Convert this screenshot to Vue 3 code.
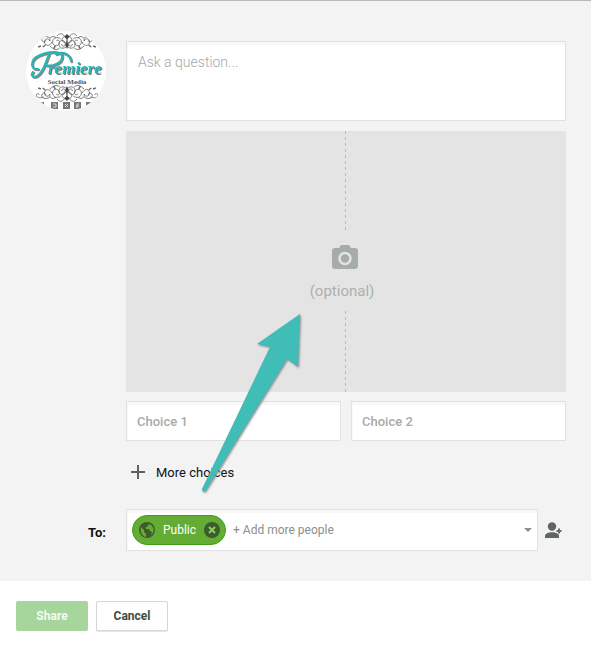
<template>
  <div class="share-box">
    <form class="composer" @submit.prevent>
      <div class="composer-body">
        <div class="avatar">
          <svg viewBox="0 0 80 80" role="img" aria-label="Premiere Social Media">
            <defs>
              <clipPath id="avatar-clip"><circle cx="40" cy="40" r="40" /></clipPath>
              <g id="scroll" fill="none" stroke="#666" stroke-width="0.9">
                <path d="M0 14c-5 0-7-4-4-6s6 2 3 4M0 4c-4-4-9-2-9 2s6 5 7 1-4-4-4-1" />
                <path d="M-7 11c-4 3-9 1-9-3s5-5 7-2-1 5-3 3M-12 12c-3 3-8 1-7-3" />
                <path d="M-17 8c-2-5-8-4-8 0s5 4 6 1M-19 12c-5 3-10 1-9-2s5-2 4 0" />
                <path d="M-26 12c-5 2-8 0-8-2s3-2 3 0M-8 2c-4-3-7-1-11 2M-3 14c-2 3-6 3-8 0" />
                <path d="M-32 3l3 1M-24 5l-3-2M-13 4l-2-3" stroke-width="1.5" />
              </g>
              <g id="ornament">
                <use href="#scroll" />
                <use href="#scroll" transform="scale(-1 1)" />
                <path d="M0 1l2 4-2 4-2-4zM0 11l3 2-3 3-3-3z" fill="#444" />
              </g>
            </defs>
            <g clip-path="url(#avatar-clip)">
              <rect width="80" height="80" fill="#fff" />
              <use href="#ornament" transform="translate(41 19) scale(0.9 -1)" />
              <use href="#ornament" transform="translate(41 54) scale(0.9 1)" />
              <text class="logo-name" x="22" y="43">remiere</text>
              <g fill="none" stroke-linecap="round">
                <path d="M24 24C20 34 18 42 12 46c-4 2-7-1-4-4M13 39C5 40 5 30 13 26c12-6 25-5 24 1 0 6-10 10-16 8M31 24c7-3 14 0 15 7" stroke="#888" stroke-width="2.5" />
                <path d="M23 23C19 33 17 41 11 45c-4 2-7-1-4-4M12 38C4 39 4 29 12 25c12-6 25-5 24 1 0 6-10 10-16 8M30 23c7-3 14 0 15 7" stroke="#20b9b7" stroke-width="2" />
              </g>
              <text class="logo-sub" x="41" y="53">Social Media</text>
              <g fill="#777">
                <rect x="11" y="71" width="7" height="7" />
                <rect x="25" y="71" width="7" height="7" />
                <rect x="37" y="71" width="7" height="7" />
                <rect x="48" y="71" width="7" height="7" />
                <rect x="60" y="71" width="7" height="7" />
              </g>
              <path d="M27 73h3v3h-3M39 73l3 3M42 73l-3 3M53 73h-2v4M50 75h3" fill="none" stroke="#ddd" />
            </g>
          </svg>
        </div>

        <div class="fields">
          <textarea v-model="question" class="box question" aria-label="Question" placeholder="Ask a question..."></textarea>

          <button type="button" class="photo-drop">
            <span class="divider"></span>
            <span class="photo-label">
              <svg class="camera" viewBox="0 0 26 24" aria-hidden="true">
                <path d="M9 0h8l2 3h4a3 3 0 0 1 3 3v15a3 3 0 0 1-3 3H3a3 3 0 0 1-3-3V6a3 3 0 0 1 3-3h4z" fill="#a6acab" />
                <circle cx="13" cy="13.5" r="5.5" fill="none" stroke="#e4e4e4" stroke-width="2.5" />
              </svg>
              <span class="photo-text">(optional)</span>
            </span>
            <span class="divider divider-bottom"></span>
          </button>

          <div class="choices">
            <input
              v-for="(choice, i) in choices"
              :key="i"
              v-model="choices[i]"
              type="text"
              class="box choice"
              :aria-label="`Choice ${i + 1}`"
              :placeholder="`Choice ${i + 1}`"
            />
          </div>

          <button type="button" class="more">
            <svg viewBox="0 0 14 14" aria-hidden="true"><path d="M0 7h14M7 0v14" stroke="#606060" stroke-width="2" /></svg>
            More choices
          </button>
        </div>

        <label class="to-label" for="people">To:</label>
        <div class="to-row">
          <div class="box people">
            <span class="chip">
              <svg class="chip-icon" viewBox="0 0 16 16" aria-hidden="true">
                <circle cx="8" cy="8" r="8" fill="#3e5b2c" />
                <path d="M2 5l3 3v2l2 2v3C3 14 1 10 2 5zM7 2h3l-1 2-2 1v2h3l1 2 2 1-1 3c4-3 3-8 0-10l-2-1z" fill="#63ad35" />
              </svg>
              Public
              <button type="button" class="chip-remove" aria-label="Remove Public">
                <svg class="chip-icon" viewBox="0 0 16 16" aria-hidden="true">
                  <circle cx="8" cy="8" r="8" fill="#3e5b2c" />
                  <path d="M5 5l6 6M11 5l-6 6" stroke="#8fd05f" stroke-width="2" />
                </svg>
              </button>
            </span>
            <input id="people" v-model="people" type="text" class="people-input" placeholder="+ Add more people" />
            <button type="button" class="caret" aria-label="Show audiences">
              <svg viewBox="0 0 8 4" aria-hidden="true"><path d="M0 0h8L4 4z" fill="#8c9291" /></svg>
            </button>
          </div>
          <button type="button" class="add-person" aria-label="Add people">
            <svg viewBox="0 0 18 16" aria-hidden="true">
              <circle cx="7" cy="4.5" r="4.2" fill="#606464" />
              <path d="M0 16v-2c0-5 14-5 14 0v2z" fill="#606464" />
              <path d="M11.5 9h5M14 6.5v5" stroke="#5e7468" stroke-width="2" />
            </svg>
          </button>
        </div>

        <svg class="pointer" viewBox="0 0 102 182" aria-hidden="true">
          <path d="M99 1L56 31l13 3L1 176c0 3 3 4 4 1L86 46l11 8z" fill="#40bdb7" />
        </svg>
      </div>

      <div class="actions">
        <button type="submit" class="btn btn-share" disabled>Share</button>
        <button type="button" class="btn btn-cancel">Cancel</button>
      </div>
    </form>
  </div>
</template>

<script setup>
import { ref } from 'vue'

const question = ref('')
const choices = ref(['', ''])
const people = ref('')
</script>

<style>
body {
  margin: 0;
  background: #fff;
}
</style>

<style scoped>
.share-box {
  border-top: 1px solid #bababa;
  font-family: Roboto, "Liberation Sans", sans-serif;
  font-size: 13px;
  color: #111;
}

button,
input,
textarea {
  box-sizing: border-box;
  margin: 0;
  font: inherit;
  color: inherit;
}

button {
  padding: 0;
  border: none;
  background: none;
  cursor: pointer;
}

svg {
  display: block;
}

.composer-body {
  position: relative;
  display: grid;
  grid-template-columns: 80px minmax(0, 1fr);
  column-gap: 20px;
  padding: 40px 25px 30px 26px;
  background: #f3f3f3;
}

.avatar {
  width: 80px;
  height: 80px;
  margin-top: -10px;
}

.logo-name {
  font-family: "Liberation Serif", serif;
  font-size: 17px;
  font-style: italic;
  font-weight: 700;
  fill: #20b9b7;
  filter: drop-shadow(1px 1px 0 #777);
}

.logo-sub {
  font-family: "Liberation Serif", serif;
  font-size: 7px;
  font-weight: 700;
  text-anchor: middle;
  fill: #555;
}

.fields {
  display: flex;
  flex-direction: column;
}

.box {
  box-sizing: border-box;
  border: 1px solid #e2e2e2;
  border-radius: 0;
  background: #fff;
  box-shadow: inset 1px 3px 1px #f8f8f8;
  outline: none;
}

.question {
  display: block;
  width: 100%;
  height: 80px;
  padding: 11px;
  font-size: 14px;
  line-height: 18px;
  font-weight: 300;
  resize: none;
}

.question::placeholder {
  color: #a6a6a6;
  opacity: 1;
}

.photo-drop {
  display: flex;
  flex-direction: column;
  align-items: center;
  height: 261px;
  margin-top: 10px;
  padding-right: 2px;
  background: #e4e4e4;
}

.divider {
  flex: 11;
  width: 1px;
  background: repeating-linear-gradient(#bcbcbc 0 3px, transparent 3px 6px);
}

.divider-bottom {
  flex: 9;
}

.photo-label {
  display: flex;
  flex-direction: column;
  align-items: center;
  gap: 12px;
  padding: 14px 0 10px;
}

.photo-text {
  padding-right: 6px;
  font-size: 15px;
  line-height: 20px;
  color: #acb0af;
}

.camera {
  width: 26px;
  height: 24px;
}

.choices {
  display: grid;
  grid-template-columns: 1fr 1fr;
  gap: 10px;
  margin-top: 9px;
}

.choice {
  width: 100%;
  height: 40px;
  padding: 0 10px;
  font-weight: 500;
}

.choice::placeholder {
  color: #a7aba9;
  opacity: 1;
}

.more {
  display: flex;
  align-items: center;
  align-self: flex-start;
  gap: 11px;
  height: 40px;
  margin-top: 11px;
  padding-left: 5px;
}

.more svg {
  width: 14px;
  height: 14px;
}

.to-label {
  align-self: center;
  margin-top: 21px;
  text-align: right;
  font-weight: 700;
}

.to-row {
  display: flex;
  align-items: center;
  gap: 7px;
  margin-top: 17px;
  padding-right: 3px;
  font-size: 12px;
}

.people {
  display: flex;
  flex: 1;
  align-items: center;
  min-width: 0;
  height: 42px;
  padding: 0 5px;
}

.chip {
  display: flex;
  align-items: center;
  gap: 8px;
  box-sizing: border-box;
  height: 30px;
  padding: 0 5px 0 6px;
  border: 1px solid #3f9d17;
  border-radius: 15px;
  background: #63ad35;
  color: #fff;
}

.chip-icon {
  width: 16px;
  height: 16px;
}

.people-input {
  flex: 1;
  min-width: 0;
  padding: 0 7px;
  border: none;
  outline: none;
  background: none;
}

.people-input::placeholder {
  color: #8a8f8d;
  opacity: 1;
}

.caret svg {
  width: 8px;
  height: 4px;
}

.add-person svg {
  width: 18px;
  height: 16px;
}

.pointer {
  position: absolute;
  top: 312px;
  left: 201px;
  width: 102px;
  height: 182px;
  filter: drop-shadow(1px 1px 1px #888);
  pointer-events: none;
}

.actions {
  display: flex;
  gap: 8px;
  padding: 20px 16px;
}

.btn {
  box-sizing: border-box;
  width: 72px;
  height: 30px;
  border-radius: 2px;
  font-size: 12px;
  font-weight: 700;
}

.btn-share {
  background: #a7d69c;
  color: #f3faf1;
  cursor: default;
}

.btn-cancel {
  border: 1px solid #d6d6d6;
  background: #fff;
  color: #404b3e;
  box-shadow: 0 1px 0 #e8e8e8;
}
</style>
